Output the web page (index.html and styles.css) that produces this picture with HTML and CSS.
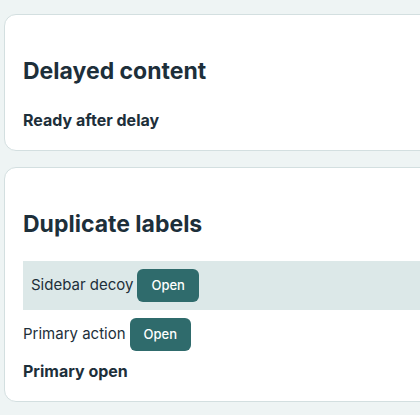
FILE: index.html
```html
<!DOCTYPE html>
<html lang="en">
  <head>
    <meta charset="UTF-8" />
    <meta name="viewport" content="width=device-width, initial-scale=1.0" />
    <title>Delayed content</title>
    <link rel="stylesheet" href="styles.css">
  </head>

  <body>
    <main class="page">
      <section class="card">
        <h2>Delayed content</h2>
        <p class="status">Ready after delay</p>
      </section>

      <section class="card">
        <h2>Duplicate labels</h2>
        <div class="row decoy">
          <span>Sidebar decoy</span>
          <button class="btn">Open</button>
        </div>
        <div class="row">
          <span>Primary action</span>
          <button class="btn">Open</button>
        </div>
        <p class="status">Primary open</p>
      </section>
    </main>
  </body>
</html>
```

FILE: styles.css
```css
html,
body {
  margin: 0;
  padding: 0;
}

body {
  background-color: #eef4f4;
  color: #1d2f3a;
  font-family: Inter, "Noto Sans", sans-serif;
  font-size: 15px;
  line-height: 1.5;
  overflow: hidden;
}

.page {
  display: flex;
  flex-direction: column;
  gap: 16px;
  width: 470px;
  padding: 14px 0 0 4px;
}

.card {
  background-color: #fff;
  border: 1px solid #d3dfe0;
  border-radius: 12px;
  padding: 18px;
}

.card h2 {
  margin: 24px 0 22px;
  font-size: 23px;
  line-height: 1.25;
  font-weight: 700;
}

.status {
  margin: 0;
  font-size: 16px;
  font-weight: 700;
}

.row {
  display: flex;
  align-items: center;
  gap: 4px;
  padding: 8px 0;
}

.row.decoy {
  margin-top: 1px;
  padding: 8px;
  background-color: #dce8e8;
}

.btn {
  font-family: Inter, "Noto Sans", sans-serif;
  font-size: 13px;
  font-weight: 500;
  line-height: 17px;
  color: #fff;
  background-color: #2f6b6c;
  border: none;
  border-radius: 6px;
  padding: 8px 14px;
}
```
